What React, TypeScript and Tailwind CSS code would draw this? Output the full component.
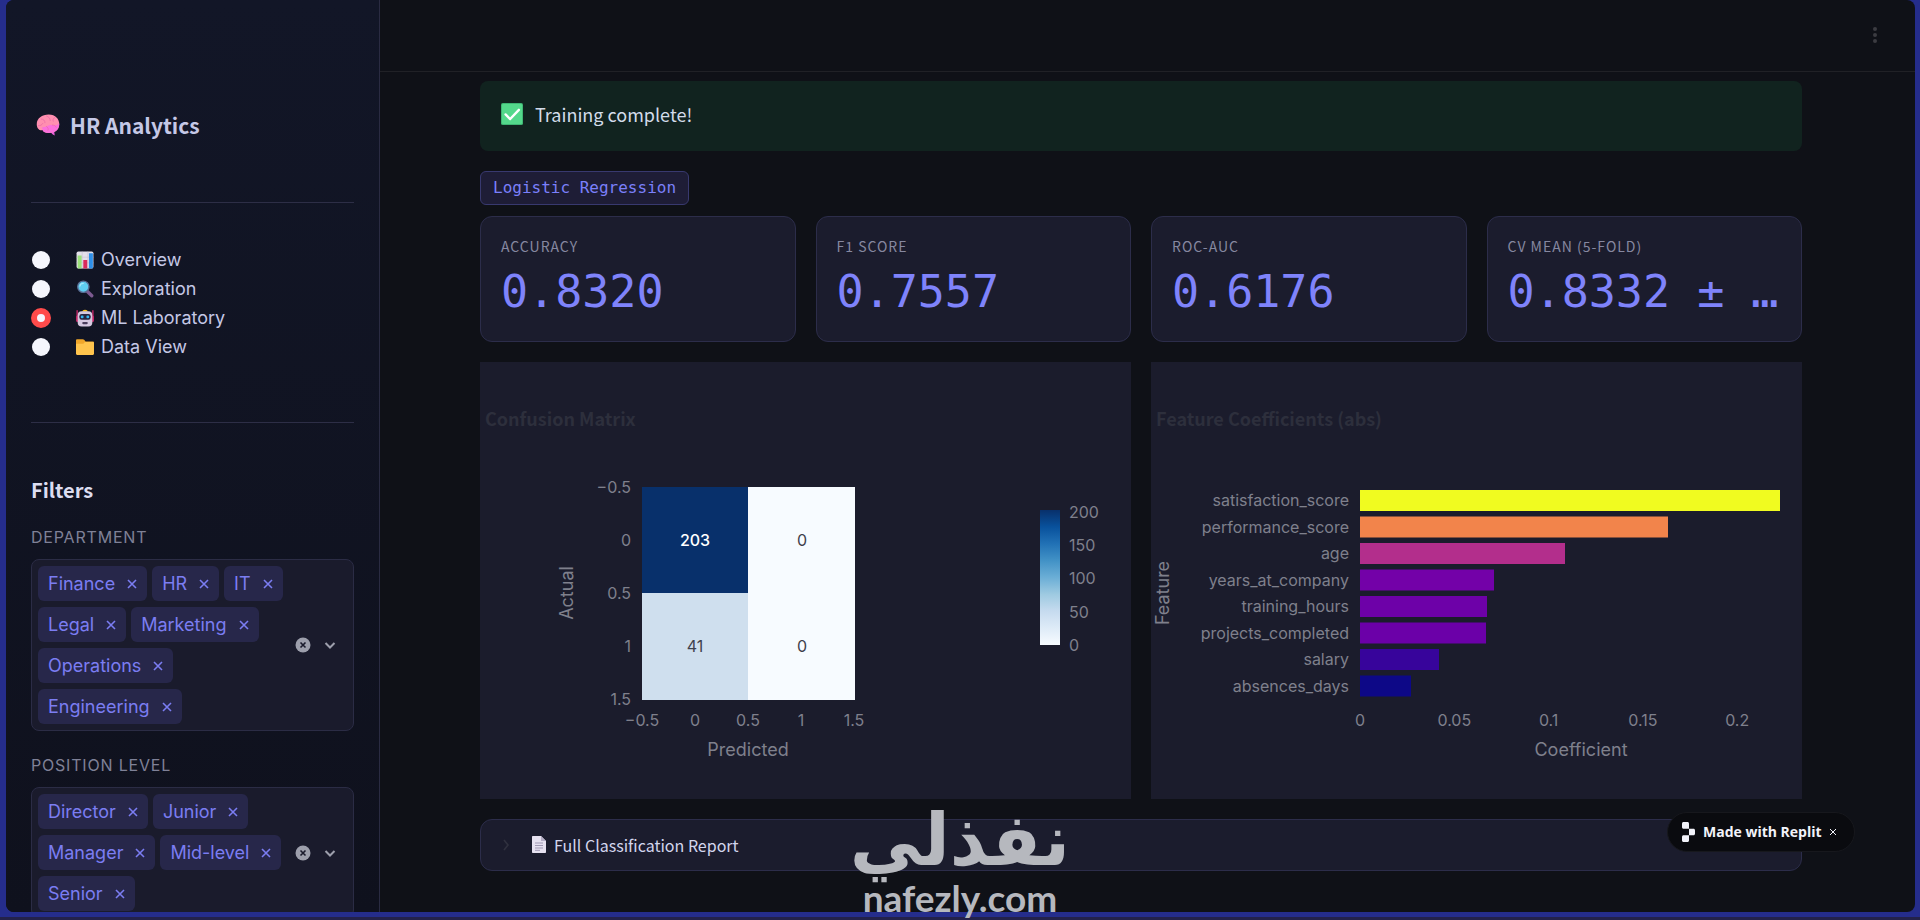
import { useState } from 'react';

const SANS = "font-['Inter','Liberation_Sans',sans-serif]";
const HEAD = "font-['Noto_Sans_CJK_SC','Noto_Sans',sans-serif]";
const MONO = "font-['DejaVu_Sans_Mono','Liberation_Mono',monospace]";

const BrainIcon = () => (
  <svg viewBox="0 0 32 32" className="w-6 h-6 shrink-0" aria-hidden="true">
    <path d="M19 23h5l1 7c-3-1-5-3-6-7z" fill="#e65fd8" />
    <path d="M1 15C1 7 8 2 17 2c9 0 14 6 14 13 0 6-4 10-9 11-5 1-12 1-13-3-5 1-8-3-8-8z" fill="#ff8fb0" />
    <path d="M8 19c5 1 7-4 13-3 5 1 8 0 10-2 0 7-4 11-9 12-5 1-12 1-13-3l-1-4z" fill="#fb70dc" />
    <path d="M7 8c3 0 5 2 5 5M14 4c3 1 5 3 5 6M25 6c-2 1-3 3-2 5M3 17c3 0 5-1 6-3M14 18c2 1 3 3 2 5M22 16c2 0 4 1 5 3" fill="none" stroke="#ea6ba6" strokeWidth="1" strokeLinecap="round" />
  </svg>
);

const ChartIcon = () => (
  <svg viewBox="0 0 32 32" className="w-[18px] h-[18px] shrink-0" aria-hidden="true">
    <rect x="1" y="1" width="30" height="30" rx="3" fill="#e3dfea" />
    <path d="M11 1v30M21 1v30M1 11h30M1 21h30" stroke="#c5bfd0" strokeWidth="1" />
    <rect x="3" y="8" width="7" height="23" fill="#9be07a" />
    <rect x="13" y="16" width="7" height="15" fill="#d9295b" />
    <rect x="23" y="4" width="7" height="27" fill="#2d8fe8" />
  </svg>
);

const SearchIcon = () => (
  <svg viewBox="0 0 32 32" className="w-[18px] h-[18px] shrink-0" aria-hidden="true">
    <path d="M19 19l9 9" stroke="#7d5a91" strokeWidth="6" strokeLinecap="round" />
    <circle cx="13" cy="12" r="10" fill="#5fcdf0" stroke="#5a6f96" strokeWidth="2.5" />
    <path d="M7 11a6 6 0 0 1 6-5" fill="none" stroke="#a5e8fb" strokeWidth="2" strokeLinecap="round" />
  </svg>
);

const RobotIcon = () => (
  <svg viewBox="0 0 32 32" className="w-[18px] h-[18px] shrink-0" aria-hidden="true">
    <path d="M2 3v16M30 3v16" stroke="#c22767" strokeWidth="2.5" strokeLinecap="round" />
    <rect x="0" y="12" width="5" height="11" rx="2" fill="#c22767" />
    <rect x="27" y="12" width="5" height="11" rx="2" fill="#c22767" />
    <path d="M11 5c0-5 10-5 10 0z" fill="#fcc419" />
    <rect x="3" y="4" width="26" height="27" rx="7" fill="#d5c8e0" />
    <rect x="6" y="9" width="20" height="10" rx="4" fill="#2a2540" />
    <circle cx="11" cy="14" r="2.6" fill="#35b6f2" />
    <circle cx="21" cy="14" r="2.6" fill="#35b6f2" />
    <rect x="11" y="23" width="10" height="4" rx="2" fill="#4a3d5c" />
  </svg>
);

const FolderIcon = () => (
  <svg viewBox="0 0 32 32" className="w-[18px] h-[18px] shrink-0" aria-hidden="true">
    <path d="M0 4c0-1 1-2 2-2h10c1 0 2 .5 2.5 1L17 6h13c1 0 2 1 2 2v6H0z" fill="#f0a62a" />
    <path d="M0 10h13l3-3h14c1 0 2 1 2 2v19c0 1-1 2-2 2H2c-1 0-2-1-2-2z" fill="#ffc44d" />
  </svg>
);

const CheckIcon = () => (
  <svg viewBox="0 0 24 24" className="w-[22px] h-[22px] shrink-0" aria-hidden="true">
    <rect x="0" y="0" width="24" height="24" rx="2" fill="#3fb573" />
    <rect x="1" y="1" width="22" height="22" rx="1.5" fill="#54d88b" />
    <path d="M5 12.5l5 5L19.5 7.5" fill="none" stroke="#fff" strokeWidth="2.6" strokeLinecap="round" strokeLinejoin="round" />
  </svg>
);

const PageIcon = () => (
  <svg viewBox="0 0 14 17" className="w-[14px] h-[17px] shrink-0" aria-hidden="true">
    <path d="M0 1c0-.6.4-1 1-1h8l5 5v11c0 .6-.4 1-1 1H1c-.6 0-1-.4-1-1z" fill="#e6e1f0" />
    <path d="M9 0l5 5H9z" fill="#b5aec6" />
    <path d="M3 7h8M3 9.5h8M3 12h8M3 14.3h5" stroke="#9f98b3" strokeWidth="1" />
  </svg>
);

const navItems = [
  { id: 'overview', label: 'Overview', icon: ChartIcon },
  { id: 'exploration', label: 'Exploration', icon: SearchIcon },
  { id: 'ml', label: 'ML Laboratory', icon: RobotIcon },
  { id: 'data', label: 'Data View', icon: FolderIcon }
];

const metrics = [
  { label: 'Accuracy', value: '0.8320' },
  { label: 'F1 Score', value: '0.7557' },
  { label: 'ROC-AUC', value: '0.6176' },
  { label: 'CV Mean (5-Fold)', value: '0.8332 ± …' }
];

const features = [
  { name: 'satisfaction_score', width: 420, fill: '#f0fb20' },
  { name: 'performance_score', width: 308, fill: '#f2844b' },
  { name: 'age', width: 205, fill: '#b32e8c' },
  { name: 'years_at_company', width: 134, fill: '#7301a8' },
  { name: 'training_hours', width: 127, fill: '#6d01a8' },
  { name: 'projects_completed', width: 126, fill: '#6b00a8' },
  { name: 'salary', width: 79, fill: '#37049b' },
  { name: 'absences_days', width: 51, fill: '#0d0887' }
];

const MultiSelect = ({ label, initial }: { label: string; initial: string[] }) => {
  const [tags, setTags] = useState(initial);
  return (
    <div role="group" aria-label={label}>
      <h3 className="text-base leading-6 uppercase tracking-wider text-[#7f8197] mb-[10px]">{label}</h3>
      <div className="flex items-center rounded-lg border border-[#2b2c45] bg-[#1a1b2c] p-[6px] pr-4">
        <div className="flex flex-1 flex-wrap gap-x-[5px] gap-y-[6px]">
          {tags.map((tag) => (
            <span key={tag} className="flex h-[35px] items-center gap-3 rounded-md bg-[#27274a] px-[10px] text-lg text-[#7b7df2]">
              {tag}
              <button type="button" aria-label={`Remove ${tag}`} onClick={() => setTags(tags.filter((t) => t !== tag))}>
                <svg viewBox="0 0 10 10" className="w-[10px] h-[10px]">
                  <path d="M1 1l8 8M9 1L1 9" stroke="currentColor" strokeWidth="1.6" />
                </svg>
              </button>
            </span>
          ))}
        </div>
        <div className="flex items-center gap-3 text-[#9d9fac]">
          <button type="button" aria-label={`Clear ${label}`} onClick={() => setTags([])}>
            <svg viewBox="0 0 16 16" className="w-4 h-4">
              <circle cx="8" cy="8" r="7.5" fill="currentColor" />
              <path d="M5.5 5.5l5 5M10.5 5.5l-5 5" stroke="#1a1b2c" strokeWidth="1.6" />
            </svg>
          </button>
          <button type="button" aria-label={`Open ${label}`}>
            <svg viewBox="0 0 14 14" className="w-[14px] h-[14px]">
              <path d="M2.5 5l4.5 4.5L11.5 5" fill="none" stroke="currentColor" strokeWidth="2" />
            </svg>
          </button>
        </div>
      </div>
    </div>
  );
};

const ConfusionMatrix = () => (
  <svg viewBox="0 0 651 437" className="w-full h-auto bg-[#1b1c2c]" role="img" aria-label="Confusion Matrix">
    <defs>
      <linearGradient id="blues" x1="0" y1="0" x2="0" y2="1">
        <stop offset="0" stopColor="#08306b" />
        <stop offset="0.125" stopColor="#08519c" />
        <stop offset="0.25" stopColor="#2171b5" />
        <stop offset="0.375" stopColor="#4292c6" />
        <stop offset="0.5" stopColor="#6baed6" />
        <stop offset="0.625" stopColor="#9ecae1" />
        <stop offset="0.75" stopColor="#c6dbef" />
        <stop offset="0.875" stopColor="#deebf7" />
        <stop offset="1" stopColor="#f7fbff" />
      </linearGradient>
    </defs>
    <text x="5" y="64" className={`${HEAD} text-lg font-bold`} fill="#2d2f3c">Confusion Matrix</text>
    <rect x="162" y="125" width="213" height="213" fill="#f7fbff" />
    <rect x="162" y="125" width="106" height="106" fill="#08306b" />
    <rect x="162" y="231" width="106" height="107" fill="#cfdfee" />
    <g className="text-base" textAnchor="middle" fill="#3f414c">
      <text x="215" y="184" fill="#fff" className="font-medium">203</text>
      <text x="322" y="184">0</text>
      <text x="215" y="290">41</text>
      <text x="322" y="290">0</text>
    </g>
    <g className="text-base" textAnchor="end" fill="#7f808c">
      {['−0.5', '0', '0.5', '1', '1.5'].map((t, i) => (
        <text key={t} x="151" y={131 + i * 53}>{t}</text>
      ))}
    </g>
    <g className="text-base" textAnchor="middle" fill="#7f808c">
      {['−0.5', '0', '0.5', '1', '1.5'].map((t, i) => (
        <text key={t} x={162 + i * 53} y="364">{t}</text>
      ))}
    </g>
    <text x="268" y="394" className="text-lg" textAnchor="middle" fill="#7f808c">Predicted</text>
    <text transform="translate(93 231) rotate(-90)" className="text-lg" textAnchor="middle" fill="#7f808c">Actual</text>
    <rect x="560" y="148" width="20" height="135" fill="url(#blues)" />
    <g className="text-base" fill="#7f808c">
      {[200, 150, 100, 50, 0].map((v) => (
        <text key={v} x="589" y={289 - Math.round((v * 2) / 3)}>{v}</text>
      ))}
    </g>
  </svg>
);

const FeatureCoefficients = () => (
  <svg viewBox="0 0 651 437" className="w-full h-auto bg-[#1b1c2c]" role="img" aria-label="Feature Coefficients">
    <text x="5" y="64" className={`${HEAD} text-lg font-bold`} fill="#2d2f3c">Feature Coefficients (abs)</text>
    {features.map((f, i) => (
      <g key={f.name}>
        <text x="198" y={144 + i * 26.5} className="text-base" textAnchor="end" fill="#7f808c">{f.name}</text>
        <rect x="209" y={128 + i * 26.5} width={f.width} height="21" fill={f.fill} />
      </g>
    ))}
    <g className="text-base" textAnchor="middle" fill="#7f808c">
      {['0', '0.05', '0.1', '0.15', '0.2'].map((t, i) => (
        <text key={t} x={209 + i * 94.3} y="364">{t}</text>
      ))}
    </g>
    <text x="430" y="394" className="text-lg" textAnchor="middle" fill="#7f808c">Coefficient</text>
    <text transform="translate(18 231) rotate(-90)" className="text-lg" textAnchor="middle" fill="#7f808c">Feature</text>
  </svg>
);

export default function App() {
  const [page, setPage] = useState('ml');

  return (
    <div className={`relative h-screen overflow-hidden bg-[#252d8c] pl-[6px] pr-[5px] pb-2 ${SANS}`}>
      <div className="flex h-full overflow-hidden rounded-lg bg-[#0f1117]">
        {/* Sidebar */}
        <aside className="w-[374px] shrink-0 overflow-hidden border-r border-[#2a2b42] bg-linear-to-b from-[#121627] to-[#0f111d] px-[25px] pt-[107px]">
          <h1 className={`${HEAD} flex items-center gap-[10px] pl-[5px] text-[21px] leading-9 font-bold text-[#c5c8e6]`}>
            <BrainIcon />
            HR Analytics
          </h1>
          <hr className="mt-[59px] border-[#2d2e46]" />

          <fieldset aria-label="Navigation" className="mt-[42px]">
            {navItems.map(({ id, label, icon: Icon }) => (
              <label key={id} className="flex h-[29px] cursor-pointer items-center text-lg text-[#c5c8e6]">
                <span className="mr-[25px] flex w-5 justify-center">
                  <input
                    type="radio"
                    name="page"
                    checked={page === id}
                    onChange={() => setPage(id)}
                    className="h-[18px] w-[18px] appearance-none rounded-full bg-[#f5f6fd] checked:h-5 checked:w-5 checked:border-[6px] checked:border-[#ff4b4b] checked:bg-[#f5f6fd]"
                  />
                </span>
                <Icon />
                <span className="ml-[7px]">{label}</span>
              </label>
            ))}
          </fieldset>
          <hr className="mt-[61px] border-[#2d2e46]" />

          <h2 className={`${HEAD} mt-[49px] mb-[17px] text-xl leading-9 font-bold text-[#dcddf0]`}>Filters</h2>
          <div className="flex flex-col gap-[22px]">
            <MultiSelect
              label="Department"
              initial={['Finance', 'HR', 'IT', 'Legal', 'Marketing', 'Operations', 'Engineering']}
            />
            <MultiSelect label="Position Level" initial={['Director', 'Junior', 'Manager', 'Mid-level', 'Senior']} />
          </div>
        </aside>

        {/* Main */}
        <div className="min-w-0 flex-1 overflow-hidden">
          <header className="flex h-[72px] items-start justify-end border-b border-[#202126] pt-[26px] pr-8">
            <button type="button" aria-label="Menu">
              <svg viewBox="0 0 16 18" className="w-4 h-[18px]" fill="#3b3c41">
                <circle cx="8" cy="3" r="2" />
                <circle cx="8" cy="9" r="2" />
                <circle cx="8" cy="15" r="2" />
              </svg>
            </button>
          </header>

          <main className="pt-[9px] pl-[100px] pr-[113px]">
            <div role="status" className={`${HEAD} flex h-[70px] items-center gap-3 rounded-lg bg-[#11231f] px-[21px] pb-1 text-lg text-[#d3dcea]`}>
              <CheckIcon />
              Training complete!
            </div>

            <div className="mt-5 mb-[11px] flex">
              <span className={`${MONO} flex h-[34px] items-center rounded-md border border-[#38396f] bg-[#1e1d36] px-3 text-base text-[#7b80fb]`}>
                Logistic Regression
              </span>
            </div>

            <div className="grid grid-cols-4 gap-5">
              {metrics.map((m) => (
                <div key={m.label} className="h-[126px] overflow-hidden rounded-xl border border-[#2c2d4a] bg-[#1b1c2d] px-5 pt-[19px]">
                  <p className={`${HEAD} text-sm leading-5 uppercase tracking-[1px] text-[#8688a0]`}>{m.label}</p>
                  <p className={`${MONO} mt-2 whitespace-nowrap text-[45px] leading-[56px] text-[#7f83fb]`}>{m.value}</p>
                </div>
              ))}
            </div>

            <div className="mt-5 grid grid-cols-2 items-start gap-5">
              <ConfusionMatrix />
              <FeatureCoefficients />
            </div>

            <button
              type="button"
              aria-expanded="false"
              className={`${HEAD} mt-5 flex h-[52px] w-full items-center rounded-xl border border-[#2c2d4a] bg-[#1b1c2d] pb-px pl-5 text-base text-[#d3d6ee]`}
            >
              <svg viewBox="0 0 10 14" className="mr-[21px] w-[10px] h-[14px]">
                <path d="M3 2l4 5-4 5" fill="none" stroke="#30313f" strokeWidth="1.6" />
              </svg>
              <PageIcon />
              <span className="ml-2">Full Classification Report</span>
            </button>
          </main>
        </div>
      </div>

      <div className="absolute inset-x-0 bottom-0 h-[3px] bg-[#23224a]" />

      {/* Replit badge */}
      <div className="absolute right-[65px] bottom-[68px] flex h-10 w-[188px] items-center rounded-full border border-[#17181d] bg-[#0a0b0f] pl-[14px] text-[#f2f3fa]">
        <svg viewBox="0 0 13 20" className="w-[13px] h-5" fill="currentColor" aria-hidden="true">
          <path d="M0 1.5C0 .7.7 0 1.5 0h4C6.3 0 7 .7 7 1.5v5.2H1.5C.7 6.700 0 6 0 5.200z" />
          <path d="M7 6.700h4.500c.8 0 1.500.7 1.500 1.500v3.600c0 .8-.7 1.500-1.500 1.500H7z" />
          <path d="M0 14.800c0-.8.7-1.500 1.500-1.500H7v5.200c0 .8-.7 1.500-1.500 1.500h-4C.7 20 0 19.300 0 18.500z" />
        </svg>
        <a href="#replit" className="ml-2 font-['Open_Sans',sans-serif] text-sm font-bold whitespace-nowrap">Made with Replit</a>
        <button type="button" aria-label="Dismiss" className="ml-2">
          <svg viewBox="0 0 6 6" className="w-[6px] h-[6px]">
            <path d="M0 0l6 6M6 0L0 6" stroke="currentColor" strokeWidth="1" />
          </svg>
        </button>
      </div>

      {/* Watermark */}
      <div className="pointer-events-none absolute inset-x-0 bottom-0 flex flex-col items-center text-[#b6b8be]">
        <p dir="rtl" lang="ar" className="font-['DejaVu_Sans',sans-serif] text-[72px] leading-[72px] font-bold">نفذلي</p>
        <p className="font-['Lato',sans-serif] text-[37px] leading-[44px] font-bold">nafezly.com</p>
      </div>
    </div>
  );
}
